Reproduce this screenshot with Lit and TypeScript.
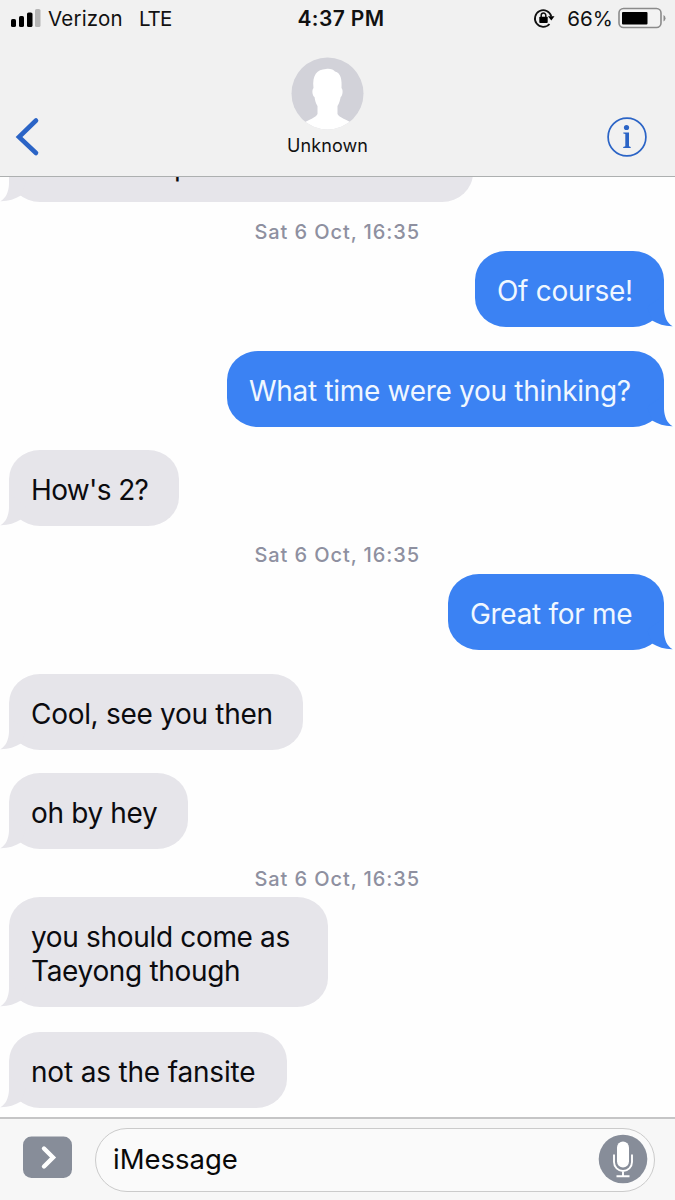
import { LitElement, html, css, svg } from "lit";
import { customElement, property } from "lit/decorators.js";
import { classMap } from "lit/directives/class-map.js";
import { styleMap } from "lit/directives/style-map.js";

type Item =
  | { kind: "stamp"; text: string; gap: number }
  | { kind: "msg"; mine?: boolean; lines: string[]; gap: number; width: number; track?: number; indent?: number };

const THREAD: Item[] = [
  { kind: "msg", lines: ["p"], gap: -51, width: 464, indent: 143 },
  { kind: "stamp", text: "Sat 6 Oct, 16:35", gap: 18 },
  { kind: "msg", mine: true, lines: ["Of course!"], gap: 7, width: 189, track: -0.3 },
  { kind: "msg", mine: true, lines: ["What time were you thinking?"], gap: 24, width: 437, track: -0.3 },
  { kind: "msg", lines: ["How's 2?"], gap: 23, width: 170, track: -0.65 },
  { kind: "stamp", text: "Sat 6 Oct, 16:35", gap: 17 },
  { kind: "msg", mine: true, lines: ["Great for me"], gap: 7, width: 216, track: -0.3 },
  { kind: "msg", lines: ["Cool, see you then"], gap: 24, width: 294, track: -0.3 },
  { kind: "msg", lines: ["oh by hey"], gap: 23, width: 179, track: -0.35 },
  { kind: "stamp", text: "Sat 6 Oct, 16:35", gap: 18 },
  { kind: "msg", lines: ["you should come as", "Taeyong though"], gap: 6, width: 319, track: -0.33 },
  { kind: "msg", lines: ["not as the fansite"], gap: 25, width: 278, track: -0.18 },
];

@customElement("chat-bubble")
export class ChatBubble extends LitElement {
  @property({ type: Boolean }) mine = false;
  @property({ attribute: false }) lines: string[] = [];
  @property({ type: Number }) width = 0;
  @property({ type: Number }) track = 0;
  @property({ type: Number }) indent = 0;

  static styles = css`
    :host { display: block; }
    .bubble {
      position: relative; box-sizing: border-box; min-height: 76px;
      padding: 23px 0 19px 22px; border-radius: 31px / 29px;
      background: #e6e5ea; color: #0b0b0f; white-space: nowrap;
      font-size: 28px; line-height: 34px;
    }
    .mine { background: #3b82f3; color: #f0f7ff; padding-left: 22.500px; }
    .line { display: block; }
    .tail { position: absolute; bottom: 0; left: -9px; width: 32px; height: 32px; fill: #e6e5ea; }
    .mine .tail { left: auto; right: -9px; transform: scaleX(-1); fill: #3b82f3; }
  `;

  render() {
    return html`<div class=${classMap({ bubble: true, mine: this.mine })}
      style=${styleMap({ width: `${this.width}px`, letterSpacing: `${this.track}px`, textIndent: `${this.indent}px` })}>
      ${this.lines.map((l) => html`<span class="line">${l}</span>`)}
      <svg class="tail" viewBox="0 0 32 32"><path d="M9 0V14C8.600 22 6 28 .3 31.300C8 31.500 15 29 21 25.500L26 12Z"/></svg>
    </div>`;
  }
}

@customElement("status-bar")
export class StatusBar extends LitElement {
  static styles = css`
    :host { display: flex; height: 37px; align-items: center; font-size: 20.5px; line-height: 37px; color: #111; }
    .side { flex: 1; display: flex; align-items: center; white-space: pre; }
    .left { padding-left: 10px; }
    .right { justify-content: flex-end; padding-right: 9px; }
    .signal { width: 31px; height: 20px; margin: 0 7px 2px 0; }
    .carrier { letter-spacing: 0.2px; }
    .net { margin-left: 16px; letter-spacing: -0.9px; }
    .time { font-weight: 600; font-size: 21px; letter-spacing: 0.4px; padding-left: 6px; }
    .pct { letter-spacing: 0.1px; }
    .lock { width: 22px; height: 22px; margin: 0 12px 1px 0; }
    .battery { width: 48px; height: 22px; margin: 0 0 1px 5px; }
  `;
  render() {
    return html`
      <div class="side left">
        <svg class="signal" viewBox="0 0 31 20"><rect x="1" y="11" width="5" height="8" rx="1.6"/><rect x="9" y="8" width="5" height="11" rx="1.6"/><rect x="17" y="4.500" width="5.500" height="14.500" rx="1.6"/><rect x="25" y="1" width="5.500" height="18" rx="1.6" fill="#b5b5b5"/></svg>
        <span class="carrier">Verizon</span><span class="net">LTE</span>
      </div>
      <div class="time">4:37 PM</div>
      <div class="side right">
        <svg class="lock" viewBox="0 0 22 22"><path d="M16.500 17A8.300 8.300 0 1 1 18.300 9.500" fill="none" stroke="#111" stroke-width="1.800"/><path d="M15 9.300H21.500L18.300 13.500Z"/><rect x="6.300" y="9.700" width="8.400" height="6.300" rx=".8"/><path d="M8.200 10.500V8.300a2.300 2.300 0 0 1 4.600 0v2.200" fill="none" stroke="#111" stroke-width="1.500"/></svg>
        <span class="pct">66%</span>
        <svg class="battery" viewBox="0 0 48 22"><rect x="1" y="1.500" width="42" height="19" rx="4.500" fill="#f3f3f3" stroke="#8b8b8b" stroke-width="1.600"/><rect x="4" y="5" width="25.500" height="12.500" rx="1"/><path d="M45.500 8q2 1 2 3.300t-2 3.300z" fill="#8b8b8b"/></svg>
      </div>`;
  }
}

@customElement("app-root")
export class AppRoot extends LitElement {
  static styles = css`
    :host {
      display: flex; flex-direction: column; height: 1200px; overflow: hidden;
      background: #fefefe; font-family: Inter, "Liberation Sans", sans-serif; color: #111;
    }
    .head { flex: none; box-sizing: border-box; height: 177px; background: #f1f1f1; border-bottom: 1px solid #adb0b0; position: relative; z-index: 1; }
    .nav { display: grid; grid-template-columns: 1fr 100px 1fr; height: 139px; }
    .back { width: 26px; height: 42px; margin: 79px 0 0 14px; }
    .contact { display: flex; flex-direction: column; align-items: center; padding-top: 20px; margin-left: -20px; }
    .avatar { width: 73px; height: 73px; }
    .name { font-size: 18px; line-height: 24px; margin-top: 4px; letter-spacing: 0.1px; }
    .info { width: 42px; height: 42px; justify-self: end; margin: 79px 27.500px 0 0; }
    .thread { flex: 1; min-height: 0; overflow: hidden; display: flex; flex-direction: column; align-items: flex-start; padding: 0 11.500px 0 9px; }
    .item { flex: none; }
    .mine { align-self: flex-end; }
    .stamp { align-self: center; font-size: 20px; line-height: 24px; font-weight: 500; color: #8e90a0; letter-spacing: 0.9px; margin-left: 2px; }
    .foot { flex: none; box-sizing: border-box; height: 83px; border-top: 2px solid #c5c5c6; background: #f7f7f7; display: flex; align-items: flex-start; padding: 9px 20px 0 23px; }
    .apps { width: 49px; height: 42px; margin-top: 8px; }
    .field { flex: 1; box-sizing: border-box; height: 64px; margin-left: 23px; border: 1.500px solid #cbcbcb; border-radius: 32px; background: #fafafa; display: flex; align-items: center; justify-content: space-between; padding: 0 6px 2px 17px; font-size: 27.500px; line-height: 34px; color: #090909; }
    .mic { width: 50px; height: 50px; }
  `;

  private item(i: Item) {
    const gap = styleMap({ marginTop: `${i.gap}px` });
    if (i.kind === "stamp") return html`<div class="item stamp" style=${gap}>${i.text}</div>`;
    return html`<chat-bubble class=${classMap({ item: true, mine: !!i.mine })} style=${gap}
      ?mine=${!!i.mine} .lines=${i.lines} .width=${i.width} .track=${i.track ?? 0} .indent=${i.indent ?? 0}></chat-bubble>`;
  }

  private portrait() {
    return svg`<defs><clipPath id="c"><circle cx="36.500" cy="36.500" r="36"/></clipPath></defs>
      <circle cx="36.500" cy="36.500" r="36" fill="#d2d2d9"/>
      <path clip-path="url(#c)" fill="#fff" d="M11 67C18 62 25 61 26.500 57V49C24.500 46 24 43 23.500 40C21.500 39 20.500 33 22.500 31C21 18 26 12.500 35 12C38 11 43 12.500 44 14.500C50 16 51 23 50.500 31C52.500 33 51.500 39 49.700 40C49 43 48.500 46 46.500 49V57C48 61 56 62 62 67V73H11Z"/>`;
  }

  render() {
    return html`
      <header class="head">
        <status-bar></status-bar>
        <div class="nav">
          <svg class="back" viewBox="0 0 26 42"><path d="M22 4.500L5 21L22 37" fill="none" stroke="#2b64c6" stroke-width="4.600" stroke-linecap="round" stroke-linejoin="miter"/></svg>
          <div class="contact"><svg class="avatar" viewBox="0 0 73 73">${this.portrait()}</svg><span class="name">Unknown</span></div>
          <svg class="info" viewBox="0 0 42 42"><circle cx="21" cy="21" r="18.900" fill="none" stroke="#2b64c6" stroke-width="1.700"/><circle cx="20.500" cy="11.500" r="2.600" fill="#2b64c6"/><path d="M17.300 16.500H23V30.300L24.700 31V32H17.200V31L19.300 30.300V18L17.300 17.500Z" fill="#2b64c6"/></svg>
        </div>
      </header>
      <main class="thread">${THREAD.map((i) => this.item(i))}</main>
      <footer class="foot">
        <svg class="apps" viewBox="0 0 49 42"><rect y=".5" width="49" height="41.500" rx="8.500" fill="#878d99"/><path d="M21 12.500L30 21.500L21 30.500" fill="none" stroke="#fff" stroke-width="4.400" stroke-linecap="round"/></svg>
        <div class="field"><span class="hint">iMessage</span>
          <svg class="mic" viewBox="0 0 50 50"><circle cx="25" cy="25" r="24.300" fill="#878d99"/><rect x="19" y="7.500" width="12" height="26" rx="6" fill="#fff"/><path d="M16 20.500V28a9 9 0 0 0 18 0V20.500M25 37V42.300M18.500 42.300H31.500" fill="none" stroke="#fff" stroke-width="1.900"/></svg>
        </div>
      </footer>`;
  }
}
